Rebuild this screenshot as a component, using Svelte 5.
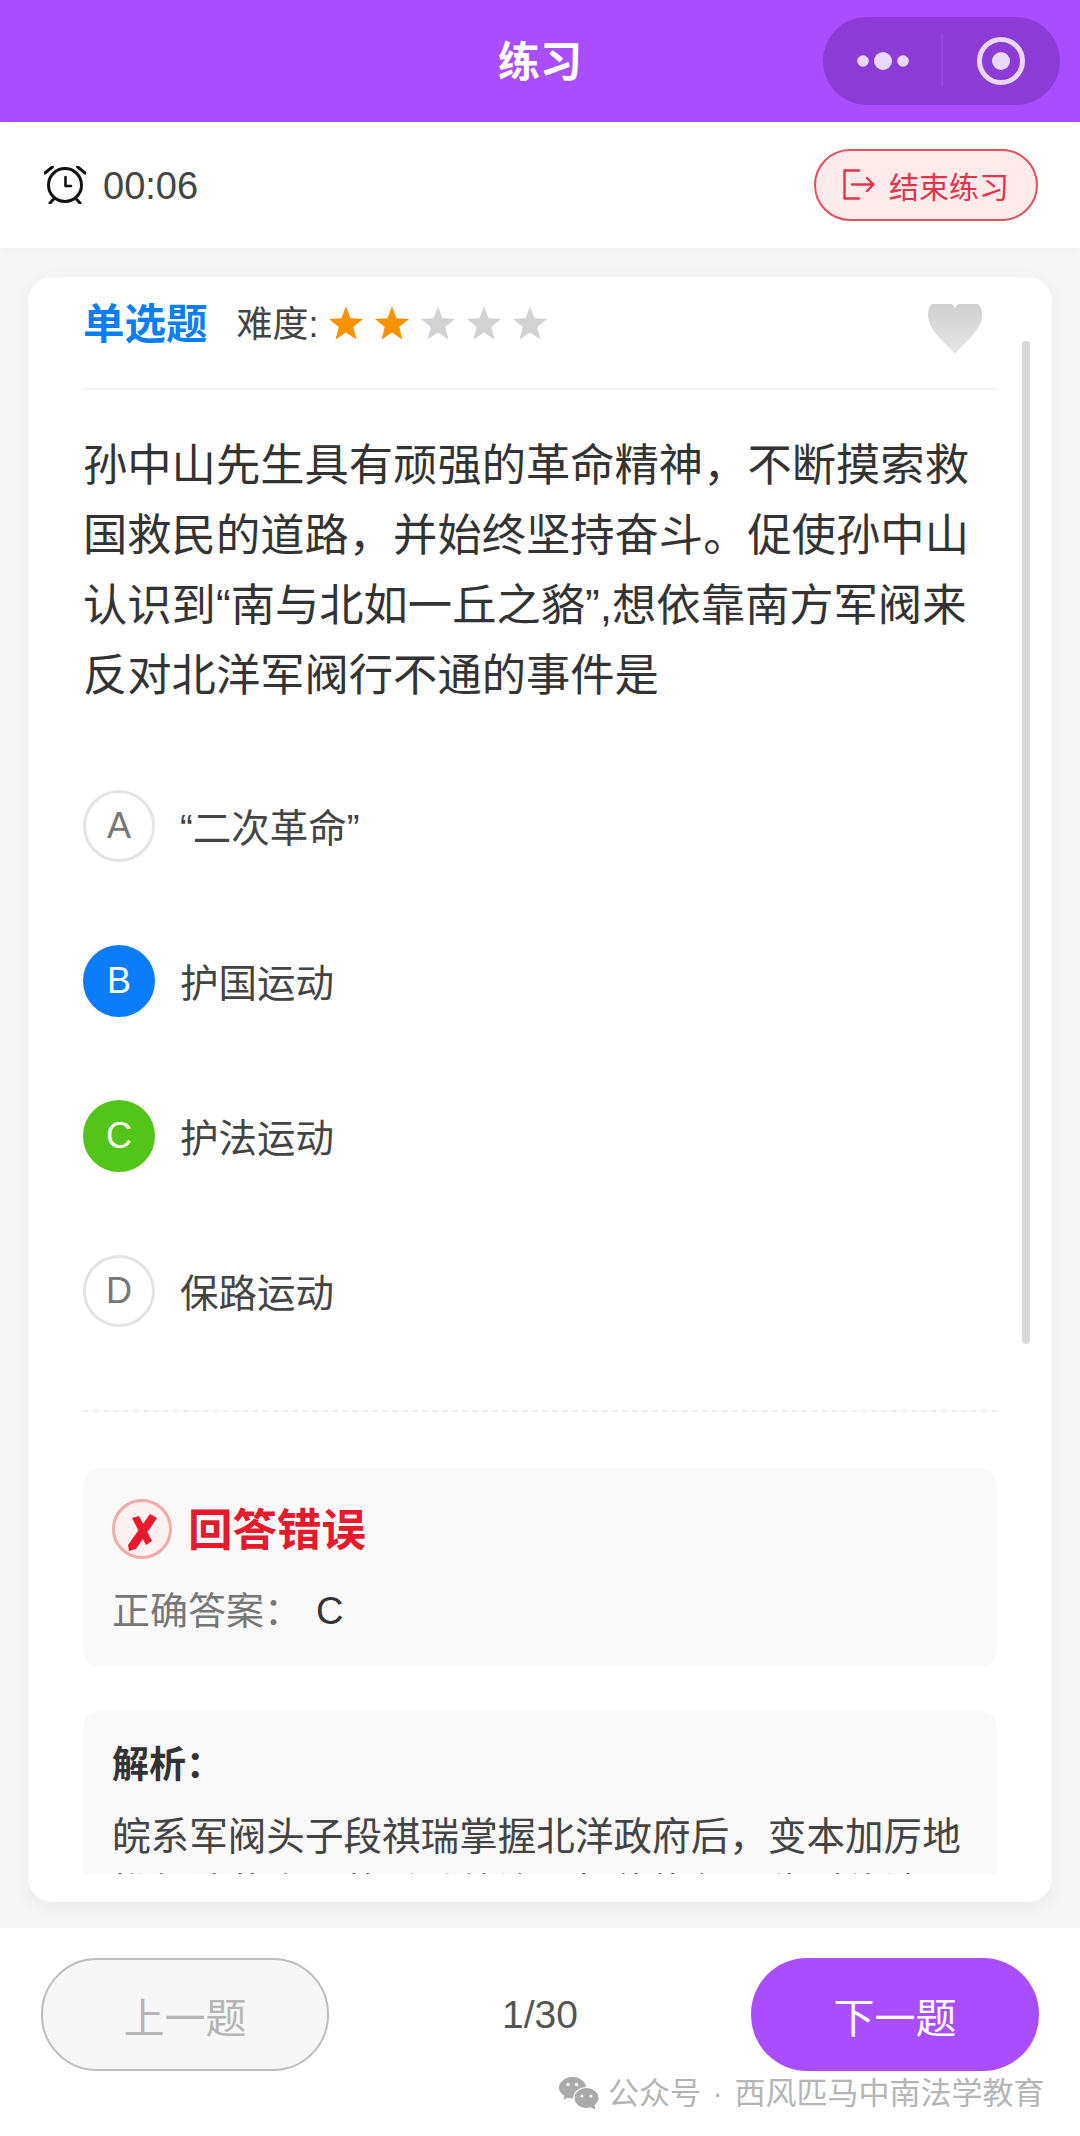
<script lang="ts">
  const stars = [true, true, false, false, false];
  const options = [
    { key: 'A', text: '“二次革命”', state: '' },
    { key: 'B', text: '护国运动', state: 'picked' },
    { key: 'C', text: '护法运动', state: 'right' },
    { key: 'D', text: '保路运动', state: '' }
  ];
</script>

<div class="page">
  <header class="nav">
    <span></span>
    <h1>练习</h1>
    <div class="capsule">
      <svg width="237" height="88" viewBox="0 0 237 88">
        <circle cx="40" cy="44" r="5.800" />
        <circle cx="60" cy="44" r="9" />
        <circle cx="80" cy="44" r="5.800" />
        <line class="split" x1="119" y1="18" x2="119" y2="70" />
        <circle class="ring" cx="178" cy="44" r="21.500" />
        <circle cx="178" cy="44" r="9" />
      </svg>
    </div>
  </header>

  <div class="timer-bar">
    <div class="timer">
      <svg width="42" height="38" viewBox="0 0 42 38" fill="none" stroke="#111" stroke-width="3" stroke-linecap="round" stroke-linejoin="round">
        <circle cx="21" cy="19" r="16.500" />
        <path d="M1 7 L8.500 .8 M33.500 .8 L41 7 M6 37 L9.300 33.500 M36 37 L32.700 33.500" />
        <path d="M21.500 11 V20 H27" stroke-width="2.600" />
      </svg>
      <span>00:06</span>
    </div>
    <button class="end">
      <svg width="32" height="32" viewBox="0 0 32 32" fill="none" stroke="#e0354a" stroke-width="2.400" stroke-linejoin="round" stroke-linecap="round">
        <path d="M16 1.500 H1.500 V29.500 H16 M9 15.500 H30.500 M24 9 L30.500 15.500 L24 22" />
      </svg>
      结束练习
    </button>
  </div>

  <main class="content">
    <section class="card">
      <div class="scroll">
        <div class="head">
          <span class="type">单选题</span>
          <span class="level">难度:</span>
          <div class="stars">
            {#each stars as on}
              <svg width="36" height="36" viewBox="0 0 24 24" class:on>
                <path d="M12 .8 L15 8.900 L23.400 9.400 L16.800 14.700 L19 23 L12 18.300 L5 23 L7.200 14.700 L.6 9.400 L9 8.900 Z" />
              </svg>
            {/each}
          </div>
          <svg class="heart" width="54" height="50" viewBox="0 0 54 50">
            <defs>
              <linearGradient id="heartfill" x1="0" y1="0" x2="0" y2="1">
                <stop offset="0" stop-color="#cfcfcf" />
                <stop offset="1" stop-color="#e6e6e6" />
              </linearGradient>
            </defs>
            <path d="M27 50 C20 41 0 27 0 11 C0 2 4 -3 14 -3 C20 -3 25 0 27 4 C29 0 34 -3 40 -3 C50 -3 54 2 54 11 C54 27 34 41 27 50 Z" fill="url(#heartfill)" />
          </svg>
        </div>

        <p class="question">孙中山先生具有顽强的革命精神，不断摸索救国救民的道路，并始终坚持奋斗。促使孙中山认识到“南与北如一丘之貉”,想依靠南方军阀来反对北洋军阀行不通的事件是</p>

        <ul class="options">
          {#each options as opt}
            <li>
              <span class="badge {opt.state}">{opt.key}</span>
              <span class="label">{opt.text}</span>
            </li>
          {/each}
        </ul>

        <div class="dashed"></div>

        <div class="box result">
          <div class="verdict">
            <svg width="60" height="60" viewBox="0 0 60 60">
              <circle cx="30" cy="30" r="28.500" fill="#fdf1f1" stroke="#f1aaaa" stroke-width="3" />
              <path d="M38 15 L45 19 L24 50 L17 52 L16 46 Z" fill="#e8192c" />
              <path d="M20 19 L27 17 L40 42 L34 46 Z" fill="#e8192c" />
            </svg>
            <strong>回答错误</strong>
          </div>
          <div class="answer">
            <span>正确答案：</span>
            <b>C</b>
          </div>
        </div>

        <div class="box analysis">
          <h3>解析：</h3>
          <p>皖系军阀头子段祺瑞掌握北洋政府后，变本加厉地推行独裁卖国的反动统治，拒绝恢复《临时约法》和国会，于是孙中山再次举起护法旗帜。</p>
        </div>
      </div>
      <div class="scrollbar"></div>
    </section>
  </main>

  <footer class="bottom">
    <button class="step prev">上一题</button>
    <span class="count">1/30</span>
    <button class="step next">下一题</button>
  </footer>

  <div class="watermark">
    <svg width="40" height="33" viewBox="0 0 40 33">
      <path d="M13.500 0 C21 0 27 4.800 27 10.700 C27 16.600 21 21.400 13.500 21.400 C11.800 21.400 10.200 21.100 8.700 20.700 L4.500 23 L5.400 18.800 C2.100 16.800 0 13.900 0 10.700 C0 4.800 6 0 13.500 0 Z" fill="#aaa" />
      <ellipse cx="27.500" cy="21.500" rx="13.500" ry="11.500" fill="#fff" />
      <path d="M27.500 11 C33.800 11 39.500 15.500 39.500 21 C39.500 24 37.800 26.400 35.500 28.200 L36.300 32.500 L31.500 30.300 C30.300 30.700 28.900 31 27.500 31 C21.200 31 15.500 26.500 15.500 21 C15.500 15.500 21.200 11 27.500 11 Z" fill="#aaa" />
      <circle cx="9" cy="7.500" r="1.700" fill="#fff" />
      <circle cx="17.500" cy="7.500" r="1.700" fill="#fff" />
      <circle cx="23" cy="19" r="1.500" fill="#fff" />
      <circle cx="32" cy="19" r="1.500" fill="#fff" />
    </svg>
    <span>公众号 · 西风匹马中南法学教育</span>
  </div>
</div>

<style>
  :global(body) {
    margin: 0;
    background: #f6f6f6;
  }

  .page {
    position: relative;
    width: 1080px;
    height: 2136px;
    display: flex;
    flex-direction: column;
    overflow: hidden;
    font-family: "Liberation Sans", "Noto Sans CJK SC", sans-serif;
    color: #333;
  }

  .nav {
    height: 122px;
    flex: none;
    display: grid;
    grid-template-columns: 1fr auto 1fr;
    align-items: center;
    background: #a94dff;
  }

  .nav h1 {
    margin: 0 0 5px;
    font-size: 42px;
    font-weight: 700;
    color: #fff;
  }

  .capsule {
    justify-self: end;
    width: 237px;
    height: 88px;
    margin-right: 20px;
    border-radius: 44px;
    background: #8c3bd6;
  }

  .capsule svg {
    display: block;
    fill: #e9d8fb;
  }

  .capsule .split {
    stroke: #9a4de0;
    stroke-width: 1.500;
  }

  .capsule .ring {
    fill: none;
    stroke: #e9d8fb;
    stroke-width: 5;
  }

  .timer-bar {
    height: 126px;
    flex: none;
    display: flex;
    align-items: center;
    justify-content: space-between;
    padding: 0 42px 0 44px;
    background: #fff;
    box-shadow: 0 2px 6px rgba(0, 0, 0, 0.03);
  }

  .timer {
    display: flex;
    align-items: center;
    gap: 17px;
    font-size: 38px;
    color: #444;
  }

  .timer span {
    padding-top: 3px;
  }

  .end {
    width: 224px;
    height: 72px;
    display: flex;
    align-items: center;
    justify-content: center;
    gap: 14px;
    padding: 0;
    border: 2px solid #e0505f;
    border-radius: 36px;
    background: #fdeaea;
    color: #e0354a;
    font: inherit;
    font-size: 30px;
  }

  .content {
    flex: 1;
    min-height: 0;
    padding: 29px 28px 26px;
  }

  .card {
    position: relative;
    height: 100%;
    box-sizing: border-box;
    padding: 11px 55px 28px;
    border-radius: 24px;
    background: #fff;
    box-shadow: 0 4px 18px rgba(0, 0, 0, 0.06);
    overflow: hidden;
  }

  .scroll {
    height: 100%;
    overflow: hidden;
  }

  .head {
    display: flex;
    align-items: center;
    height: 100px;
    border-bottom: 2px solid #f4f4f4;
  }

  .head > * {
    margin-bottom: 34px;
  }

  .type {
    font-size: 41.500px;
    font-weight: 700;
    color: #0a7ff5;
  }

  .level {
    margin-left: 29px;
    font-size: 36px;
    color: #444;
  }

  .stars {
    display: flex;
    gap: 10px;
    margin-left: 9px;
    margin-bottom: 31px;
  }

  .stars svg {
    fill: #d2d2d2;
  }

  .stars svg.on {
    fill: #f59300;
  }

  .heart {
    margin-left: auto;
    margin-right: 15px;
    margin-bottom: 18px;
  }

  .question {
    margin: 41px 0 0;
    font-size: 44.300px;
    line-height: 70px;
    color: #333;
  }

  .options {
    list-style: none;
    margin: 79px 0 0;
    padding: 0;
    display: flex;
    flex-direction: column;
    gap: 83px;
  }

  .options li {
    display: flex;
    align-items: center;
    gap: 25px;
  }

  .badge {
    width: 72px;
    height: 72px;
    box-sizing: border-box;
    flex: none;
    display: flex;
    align-items: center;
    justify-content: center;
    border: 3px solid #e4e4e4;
    border-radius: 50%;
    font-size: 36px;
    color: #777;
  }

  .badge.picked {
    border-color: #0a7cf7;
    background: #0a7cf7;
    color: #fff;
  }

  .badge.right {
    border-color: #52c41a;
    background: #52c41a;
    color: #fff;
  }

  .label {
    margin-bottom: 3px;
    font-size: 38.500px;
    color: #444;
  }

  .dashed {
    margin-top: 83px;
    border-top: 2px dashed #eeeeee;
  }

  .box {
    border-radius: 16px;
    background: #f9f9f9;
    padding: 0 29px;
  }

  .result {
    margin-top: 56px;
    height: 199px;
    padding-top: 26px;
    box-sizing: border-box;
  }

  .verdict {
    display: flex;
    align-items: center;
    gap: 16px;
  }

  .verdict strong {
    margin-bottom: 4px;
    font-size: 44.500px;
    color: #e8192c;
  }

  .answer {
    margin-top: 17px;
    display: flex;
    align-items: baseline;
    font-size: 38px;
    color: #777;
  }

  .answer b {
    margin-left: 14px;
    font-weight: 400;
    color: #333;
  }

  .analysis {
    margin-top: 44px;
    padding-top: 30px;
    padding-bottom: 30px;
  }

  .analysis h3 {
    margin: 0;
    font-size: 37px;
    line-height: 50px;
    font-weight: 700;
    color: #333;
  }

  .analysis p {
    margin: 18px 0 0;
    font-size: 38.600px;
    line-height: 56px;
    color: #444;
  }

  .scrollbar {
    position: absolute;
    left: 994px;
    top: 64px;
    width: 8px;
    height: 1003px;
    border-radius: 4px;
    background: #d8d8d8;
  }

  .bottom {
    height: 208px;
    flex: none;
    box-sizing: border-box;
    display: flex;
    align-items: flex-start;
    justify-content: space-between;
    padding: 30px 41px 0;
    background: #fff;
  }

  .step {
    width: 288px;
    height: 113px;
    border-radius: 56px;
    padding: 0;
    font: inherit;
    font-size: 41px;
  }

  .prev {
    border: 2px solid #bdbdbd;
    background: #f7f7f7;
    color: #b5b5b5;
  }

  .next {
    border: 0;
    background: #a94dff;
    color: #fff;
  }

  .count {
    align-self: flex-start;
    line-height: 113px;
    font-size: 39px;
    color: #555;
  }

  .watermark {
    position: absolute;
    left: 559px;
    top: 2077px;
    display: flex;
    align-items: center;
    gap: 9px;
    font-size: 31px;
    line-height: 33px;
    word-spacing: 3px;
    color: #b5b5b5;
    white-space: nowrap;
  }
</style>
